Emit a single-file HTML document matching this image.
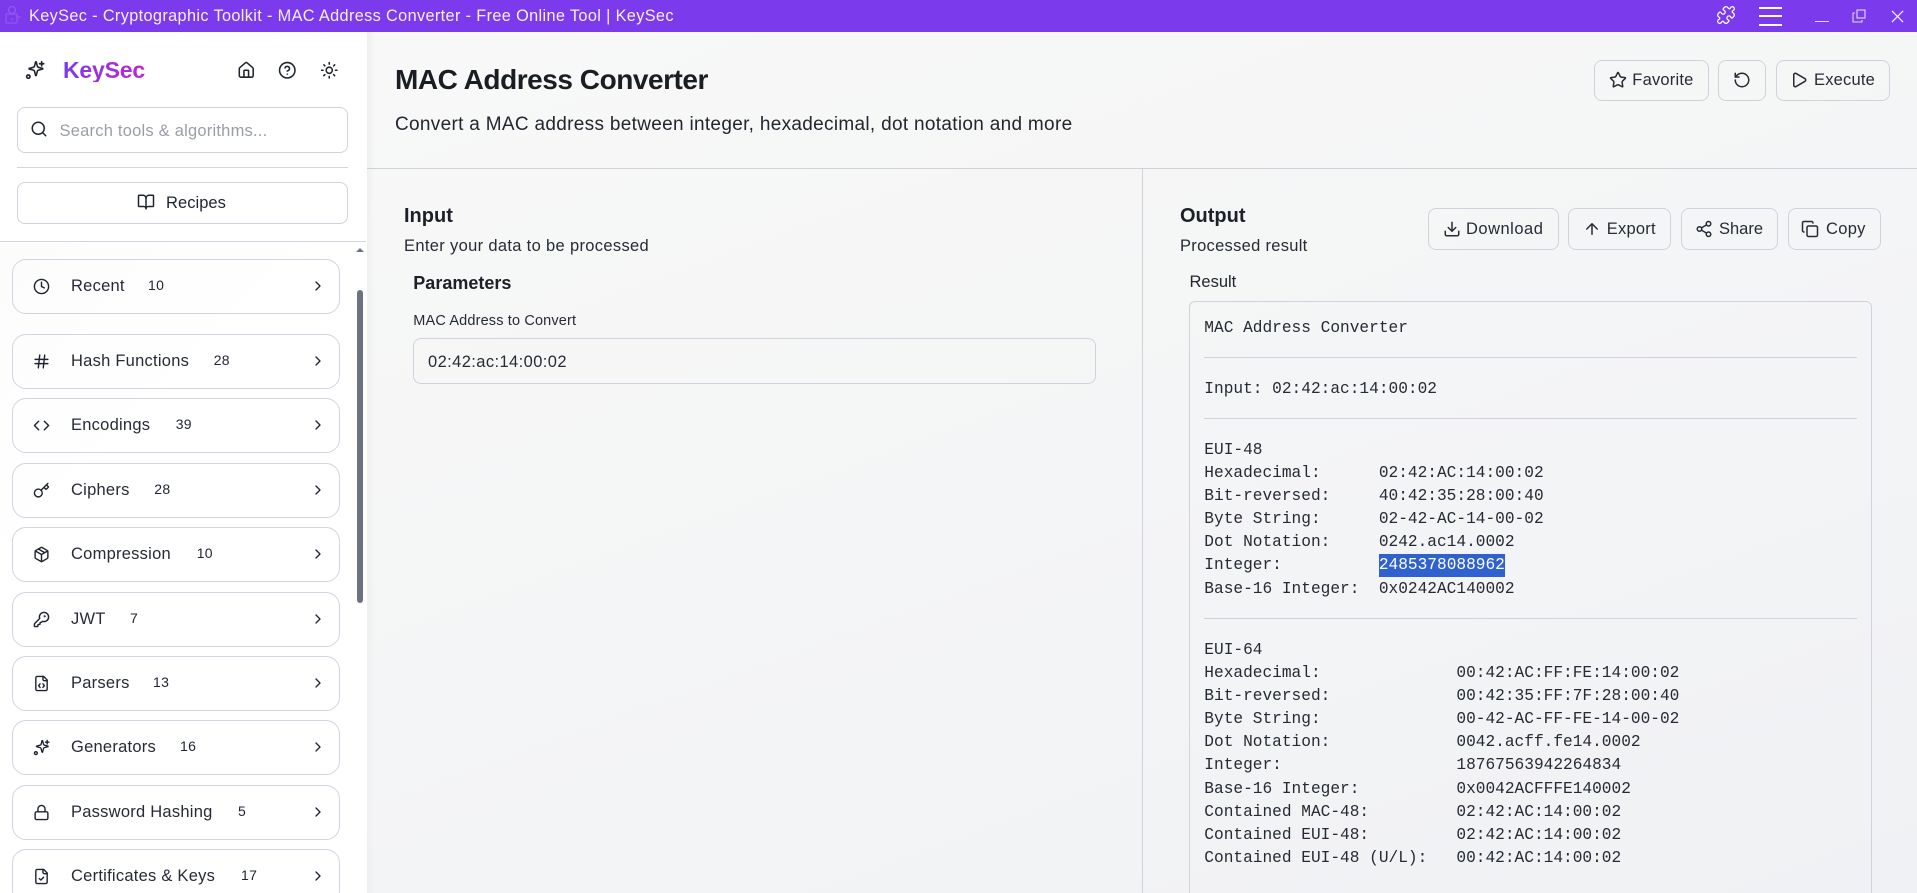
<!DOCTYPE html>
<html lang="en"><head><meta charset="utf-8"><title>KeySec - MAC Address Converter</title>
<style>
*{box-sizing:border-box;margin:0;padding:0}
html,body{width:1917px;height:893px;overflow:hidden;background:#f4f5f6}
body{position:relative;font-family:"Liberation Sans",sans-serif;color:#1f2430}
svg.i{position:absolute;fill:none;stroke:currentColor;stroke-width:2;stroke-linecap:round;stroke-linejoin:round}
.t{position:absolute;white-space:pre;line-height:24px}
#bar{position:absolute;left:0;top:0;width:1917px;height:32px;background:#7c3aed;color:#fff}
#side{position:absolute;left:0;top:32px;width:367px;height:861px;background:linear-gradient(135deg,#fafafb 0%,#fff 45%,#fff 100%);overflow:hidden}
#sidetop{position:absolute;left:0;top:0;width:366px;height:210px;background:#fff;border-bottom:1px solid #d3d6e0}
#main{position:absolute;left:367px;top:32px;width:1550px;height:861px;background:linear-gradient(160deg,#f8f8f8 0%,#f4f5f6 50%,#f0f1f4 100%)}
#shade{position:absolute;left:0;top:0;width:8px;height:861px;background:linear-gradient(90deg,#efefef,rgba(240,240,240,0))}
.abs{position:absolute}
.box{position:absolute;border:1px solid #cfd3de;border-radius:8px}
.item{position:absolute;left:12.3px;width:327.4px;height:54.5px;border:1px solid #d2d5e0;border-radius:14px}
.item .n{position:absolute;left:57.7px;top:0;line-height:53.5px;font-size:16.5px;letter-spacing:.25px;white-space:pre;color:#272b36}
.item .c{position:absolute;top:-1px;line-height:52.5px;font-size:14px;letter-spacing:.3px;color:#1f2430}
.item svg.ic{left:20.2px;top:17.75px;width:17px;height:17px;stroke-width:2}
.item svg.ch{left:296.7px;top:17.75px;width:16px;height:16px;stroke-width:2}
.btn{position:absolute;border:1px solid #cfd3de;border-radius:8px}
.btn .x{position:absolute;white-space:pre;font-size:16.5px;top:0;line-height:38.7px;color:#272b36}
.btn svg{width:18px;height:18px;top:10.35px;color:#272b36}
.o svg{top:10.85px}
.o .x{top:1px;line-height:39.7px}
pre{position:absolute;left:1204.3px;font-family:"Liberation Mono",monospace;font-size:16.17px;line-height:23.19px;color:#262a34}
.hr{position:absolute;left:1204px;width:653px;height:1px;background:#d0d3de}
</style></head><body>
<svg width="0" height="0" style="position:absolute"><defs>
<symbol id="spark" viewBox="0 0 24 24"><path d="M10.4 15.8A2 2 0 0 0 9 14.4l-5-1.3a.5.5 0 0 1 0-1l5-1.3a2 2 0 0 0 1.4-1.4l1.3-5a.5.5 0 0 1 1 0l1.3 5a2 2 0 0 0 1.4 1.4l5 1.3a.5.5 0 0 1 0 1l-5 1.3a2 2 0 0 0-1.4 1.4l-1.3 5a.5.5 0 0 1-1 0z" transform="translate(1.5 -1.5) scale(.95)"/><path d="M20 2v5M22.5 4.5h-5"/><circle cx="4" cy="20" r="2"/></symbol>
<symbol id="chev" viewBox="0 0 24 24"><path d="m9 18 6-6-6-6"/></symbol>
<symbol id="clock" viewBox="0 0 24 24"><circle cx="12" cy="12" r="10"/><path d="M12 6v6l4 2"/></symbol>
<symbol id="hash" viewBox="0 0 24 24"><path d="M3 9h18M3 15h18M9.5 3 7.5 21M16.5 3l-2 18"/></symbol>
<symbol id="code" viewBox="0 0 24 24"><path d="m16 18 6-6-6-6M8 6l-6 6 6 6"/></symbol>
<symbol id="key" viewBox="0 0 24 24"><path d="m15.5 7.5 2.3 2.3a1 1 0 0 0 1.4 0l2.1-2.1a1 1 0 0 0 0-1.4L19 4M21 2l-9.6 9.6"/><circle cx="7.5" cy="15.5" r="5.5"/></symbol>
<symbol id="pkg" viewBox="0 0 24 24"><path d="M11 21.73a2 2 0 0 0 2 0l7-4A2 2 0 0 0 21 16V8a2 2 0 0 0-1-1.73l-7-4a2 2 0 0 0-2 0l-7 4A2 2 0 0 0 3 8v8a2 2 0 0 0 1 1.73z"/><path d="M12 22V12M3.29 7 12 12l8.71-5M7.5 4.27l9 5.15"/></symbol>
<symbol id="keyr" viewBox="0 0 24 24"><path d="M2.586 17.414A2 2 0 0 0 2 18.828V21a1 1 0 0 0 1 1h3a1 1 0 0 0 1-1v-1a1 1 0 0 1 1-1h1a1 1 0 0 0 1-1v-1a1 1 0 0 1 1-1h.172a2 2 0 0 0 1.414-.586l.814-.814a6.5 6.5 0 1 0-4-4z"/><circle cx="16.5" cy="7.5" r=".5" fill="currentColor"/></symbol>
<symbol id="fcode" viewBox="0 0 24 24"><path d="M15 2H6a2 2 0 0 0-2 2v16a2 2 0 0 0 2 2h12a2 2 0 0 0 2-2V7Z"/><path d="M14 2v4a2 2 0 0 0 2 2h4M10 12.5 8 15l2 2.5M14 12.5l2 2.5-2 2.5"/></symbol>
<symbol id="lock" viewBox="0 0 24 24"><rect x="3" y="11" width="18" height="11" rx="2"/><path d="M7 11V7a5 5 0 0 1 10 0v4"/></symbol>
<symbol id="fcheck" viewBox="0 0 24 24"><path d="M15 2H6a2 2 0 0 0-2 2v16a2 2 0 0 0 2 2h12a2 2 0 0 0 2-2V7Z"/><path d="M14 2v4a2 2 0 0 0 2 2h4M9 15l2 2 4-4"/></symbol>
</defs></svg>

<div id="bar">
  <svg class="abs" style="left:3px;top:4px" width="18" height="22" viewBox="0 0 18 22" fill="none" stroke="#9157f0" stroke-width="1.3"><circle cx="9" cy="6" r="3.5"/><rect x="3" y="10" width="11" height="9" rx="1"/><path d="M14 13h4M9 14v2"/></svg>
  <div class="t" style="left:29px;top:4px;font-size:16.3px;letter-spacing:.36px;color:#f5efff">KeySec - Cryptographic Toolkit - MAC Address Converter - Free Online Tool | KeySec</div>
  <svg class="i" style="left:1716px;top:5px;stroke-width:1.5;color:#fff" width="20" height="20" viewBox="0 0 24 24"><path d="M19.439 7.85c-.049.322.059.648.289.878l1.568 1.568c.47.47.706 1.087.706 1.704s-.235 1.233-.706 1.704l-1.611 1.611a.98.98 0 0 1-.837.276c-.47-.07-.802-.48-.968-.925a2.501 2.501 0 1 0-3.214 3.214c.446.166.855.497.925.968a.979.979 0 0 1-.276.837l-1.61 1.61a2.404 2.404 0 0 1-1.705.707 2.402 2.402 0 0 1-1.704-.706l-1.568-1.568a1.026 1.026 0 0 0-.877-.29c-.493.074-.84.504-1.02.968a2.5 2.5 0 1 1-3.237-3.237c.464-.18.894-.527.967-1.02a1.026 1.026 0 0 0-.289-.877l-1.568-1.568A2.402 2.402 0 0 1 1.998 12c0-.617.236-1.234.706-1.704L4.23 8.77c.24-.24.581-.353.917-.303.515.077.877.528 1.073 1.01a2.5 2.5 0 1 0 3.259-3.259c-.482-.196-.933-.558-1.01-1.073-.05-.336.062-.676.303-.917l1.525-1.525A2.402 2.402 0 0 1 12 1.998c.617 0 1.234.236 1.704.706l1.568 1.568c.23.23.556.338.877.29.493-.074.84-.504 1.02-.968a2.5 2.5 0 1 1 3.237 3.237c-.464.18-.894.527-.967 1.02Z"/></svg>
  <div class="abs" style="left:1759px;top:7px;width:23px;height:2px;background:#fff"></div>
  <div class="abs" style="left:1759px;top:15px;width:23px;height:2px;background:#fff"></div>
  <div class="abs" style="left:1759px;top:24px;width:23px;height:2px;background:#fff"></div>
  <div class="abs" style="left:1815px;top:21px;width:14px;height:1px;background:#e6d9ff"></div>
  <svg class="abs" style="left:1852px;top:9px" width="14" height="14" viewBox="0 0 14 14" fill="none" stroke="#e6d9ff" stroke-width="1.1"><rect x="5" y="1" width="8" height="8"/><path d="M3 4H1v9h9v-2"/></svg>
  <svg class="abs" style="left:1891px;top:10px" width="13" height="13" viewBox="0 0 14 14" fill="none" stroke="#f5efff" stroke-width="1.4"><path d="M1 1l12 12M13 1 1 13"/></svg>
</div>

<div id="side">
  <div id="sidetop"></div>
  <svg class="i" style="left:25px;top:28px;color:#1f2430;stroke-width:2" width="20" height="20"><use href="#spark"/></svg>
  <div class="t" style="left:63px;top:26px;font-size:23px;font-weight:bold;letter-spacing:-.2px;background:linear-gradient(90deg,#7c3aed,#c026d3);-webkit-background-clip:text;background-clip:text;color:transparent;padding-right:2px">KeySec</div>
  <svg class="i" style="left:237px;top:29px" width="18.5" height="18.5" viewBox="0 0 24 24"><path d="M15 21v-8a1 1 0 0 0-1-1h-4a1 1 0 0 0-1 1v8"/><path d="M3 10a2 2 0 0 1 .709-1.528l7-5.999a2 2 0 0 1 2.582 0l7 5.999A2 2 0 0 1 21 10v9a2 2 0 0 1-2 2H5a2 2 0 0 1-2-2z"/></svg>
  <svg class="i" style="left:278px;top:29px" width="18.5" height="18.5" viewBox="0 0 24 24"><circle cx="12" cy="12" r="10"/><path d="M9.09 9a3 3 0 0 1 5.83 1c0 2-3 3-3 3M12 17h.01"/></svg>
  <svg class="i" style="left:320px;top:29px" width="18.5" height="18.5" viewBox="0 0 24 24"><circle cx="12" cy="12" r="4"/><path d="M12 2v2M12 20v2M4.93 4.93l1.41 1.41M17.66 17.66l1.41 1.41M2 12h2M20 12h2M6.34 17.66l-1.41 1.41M19.07 4.93l-1.41 1.41"/></svg>

  <div class="box" style="left:17px;top:75px;width:331px;height:46px"></div>
  <svg class="i" style="left:30px;top:88px" width="18" height="18" viewBox="0 0 24 24"><path d="m21 21-4.3-4.3"/><circle cx="11" cy="11" r="8"/></svg>
  <div class="t" style="left:59.5px;top:87px;font-size:16.5px;letter-spacing:.22px;color:#9a9ea8">Search tools &amp; algorithms...</div>
  <div class="abs" style="left:17px;top:135px;width:331px;height:1px;background:#d3d6e0"></div>
  <div class="box" style="left:17px;top:150px;width:331px;height:41.5px"></div>
  <svg class="i" style="left:137px;top:161px" width="18" height="18" viewBox="0 0 24 24"><path d="M12 7v14"/><path d="M3 18a1 1 0 0 1-1-1V4a1 1 0 0 1 1-1h5a4 4 0 0 1 4 4 4 4 0 0 1 4-4h5a1 1 0 0 1 1 1v13a1 1 0 0 1-1 1h-6a3 3 0 0 0-3 3 3 3 0 0 0-3-3z"/></svg>
  <div class="t" style="left:166px;top:159px;font-size:16.5px;letter-spacing:.05px">Recipes</div>

  <div class="abs" style="left:356px;top:216px;width:0;height:0;border-left:4px solid transparent;border-right:4px solid transparent;border-bottom:4px solid #6b7280"></div>
  <div class="abs" style="left:357px;top:258px;width:6px;height:313px;background:#6b7280;border-radius:3px"></div>

  <div class="item" style="top:227.3px"><svg class="i ic"><use href="#clock"/></svg><span class="n">Recent</span><span class="c" style="left:134.7px">10</span><svg class="i ch"><use href="#chev"/></svg></div>
  <div class="item" style="top:302px"><svg class="i ic"><use href="#hash"/></svg><span class="n">Hash Functions</span><span class="c" style="left:200.4px">28</span><svg class="i ch"><use href="#chev"/></svg></div>
  <div class="item" style="top:366.3px"><svg class="i ic"><use href="#code"/></svg><span class="n">Encodings</span><span class="c" style="left:162.4px">39</span><svg class="i ch"><use href="#chev"/></svg></div>
  <div class="item" style="top:431.3px"><svg class="i ic"><use href="#key"/></svg><span class="n">Ciphers</span><span class="c" style="left:141px">28</span><svg class="i ch"><use href="#chev"/></svg></div>
  <div class="item" style="top:495.3px"><svg class="i ic"><use href="#pkg"/></svg><span class="n">Compression</span><span class="c" style="left:183.4px">10</span><svg class="i ch"><use href="#chev"/></svg></div>
  <div class="item" style="top:560px"><svg class="i ic"><use href="#keyr"/></svg><span class="n">JWT</span><span class="c" style="left:116.7px">7</span><svg class="i ch"><use href="#chev"/></svg></div>
  <div class="item" style="top:624px"><svg class="i ic"><use href="#fcode"/></svg><span class="n">Parsers</span><span class="c" style="left:139.7px">13</span><svg class="i ch"><use href="#chev"/></svg></div>
  <div class="item" style="top:688.3px;height:55px"><svg class="i ic"><use href="#spark"/></svg><span class="n">Generators</span><span class="c" style="left:166.7px">16</span><svg class="i ch"><use href="#chev"/></svg></div>
  <div class="item" style="top:753.3px"><svg class="i ic"><use href="#lock"/></svg><span class="n">Password Hashing</span><span class="c" style="left:224.7px">5</span><svg class="i ch"><use href="#chev"/></svg></div>
  <div class="item" style="top:817.3px"><svg class="i ic"><use href="#fcheck"/></svg><span class="n">Certificates &amp; Keys</span><span class="c" style="left:227.7px">17</span><svg class="i ch"><use href="#chev"/></svg></div>
</div>

<div id="main"><div id="shade"></div></div>

<div class="t" style="left:395px;top:68px;font-size:28px;font-weight:bold;letter-spacing:-.46px;color:#1a1d24">MAC Address Converter</div>
<div class="t" style="left:395px;top:113px;font-size:19px;letter-spacing:.31px;color:#22262f">Convert a MAC address between integer, hexadecimal, dot notation and more</div>
<div class="abs" style="left:367px;top:168px;width:1550px;height:1px;background:#cfd2dd"></div>
<div class="abs" style="left:1142px;top:168px;width:1px;height:725px;background:#cfd2dd"></div>

<div class="btn" style="left:1594px;top:60px;width:114.7px;height:40.7px"><svg class="i" style="left:14px" viewBox="0 0 24 24"><path d="M11.525 2.295a.53.53 0 0 1 .95 0l2.31 4.679a2.123 2.123 0 0 0 1.595 1.16l5.166.756a.53.53 0 0 1 .294.904l-3.736 3.638a2.123 2.123 0 0 0-.611 1.878l.882 5.14a.53.53 0 0 1-.771.56l-4.618-2.428a2.122 2.122 0 0 0-1.973 0L6.396 21.01a.53.53 0 0 1-.77-.56l.881-5.139a2.122 2.122 0 0 0-.611-1.879L2.16 9.795a.53.53 0 0 1 .294-.906l5.165-.755a2.122 2.122 0 0 0 1.597-1.16z"/></svg><span class="x" style="left:37.3px;letter-spacing:.2px">Favorite</span></div>
<div class="btn" style="left:1718.3px;top:60px;width:47.7px;height:40.7px"><svg class="i" style="left:13.7px" viewBox="0 0 24 24"><path d="M3 12a9 9 0 1 0 9-9 9.75 9.75 0 0 0-6.74 2.74L3 8"/><path d="M3 3v5h5"/></svg></div>
<div class="btn" style="left:1776px;top:60px;width:114px;height:40.7px"><svg class="i" style="left:13px" viewBox="0 0 24 24"><path d="M5 5a2 2 0 0 1 3.008-1.728l11.997 6.998a2 2 0 0 1 .003 3.458l-12 7A2 2 0 0 1 5 19z"/></svg><span class="x" style="left:37px;letter-spacing:.2px">Execute</span></div>

<div class="t" style="left:404px;top:204px;font-size:20px;font-weight:bold;color:#1d2028">Input</div>
<div class="t" style="left:404px;top:233.5px;font-size:16.5px;letter-spacing:.33px;color:#272b36">Enter your data to be processed</div>
<div class="t" style="left:413.3px;top:271px;font-size:18px;font-weight:bold;color:#1d2028">Parameters</div>
<div class="t" style="left:413.3px;top:309px;font-size:14.5px;letter-spacing:.15px;color:#272b36">MAC Address to Convert</div>
<div class="box" style="left:413px;top:338px;width:682.6px;height:45.5px"></div>
<div class="t" style="left:428px;top:350px;font-size:16.5px;letter-spacing:.4px;color:#272b36">02:42:ac:14:00:02</div>

<div class="t" style="left:1180px;top:204px;font-size:20px;font-weight:bold;color:#1d2028">Output</div>
<div class="t" style="left:1180px;top:233.5px;font-size:16.5px;letter-spacing:.29px;color:#272b36">Processed result</div>

<div class="btn o" style="left:1428px;top:208px;width:130.7px;height:41.7px"><svg class="i" style="left:14px" viewBox="0 0 24 24"><path d="M12 15V3M21 15v4a2 2 0 0 1-2 2H5a2 2 0 0 1-2-2v-4M7 10l5 5 5-5"/></svg><span class="x" style="left:37px;letter-spacing:.5px">Download</span></div>
<div class="btn o" style="left:1568.3px;top:208px;width:102.4px;height:41.7px"><svg class="i" style="left:13.7px" viewBox="0 0 24 24"><path d="m5 12 7-7 7 7M12 19V5"/></svg><span class="x" style="left:37.4px;letter-spacing:.25px">Export</span></div>
<div class="btn o" style="left:1681px;top:208px;width:96.5px;height:41.7px"><svg class="i" style="left:13px" viewBox="0 0 24 24"><circle cx="18" cy="5" r="3"/><circle cx="6" cy="12" r="3"/><circle cx="18" cy="19" r="3"/><path d="m8.59 13.51 6.83 3.98M15.41 6.51l-6.82 3.98"/></svg><span class="x" style="left:37px">Share</span></div>
<div class="btn o" style="left:1788px;top:208px;width:92.7px;height:41.7px"><svg class="i" style="left:12px" viewBox="0 0 24 24"><rect x="8" y="8" width="14" height="14" rx="2"/><path d="M4 16c-1.1 0-2-.9-2-2V4c0-1.1.9-2 2-2h10c1.1 0 2 .9 2 2"/></svg><span class="x" style="left:37px;letter-spacing:.3px">Copy</span></div>

<div class="t" style="left:1189.5px;top:270px;font-size:16.5px;color:#22262f">Result</div>
<div class="abs" style="left:1189px;top:301px;width:683px;height:620px;border:1px solid #cfd3de;border-radius:6px"></div>
<pre style="top:317.4px">MAC Address Converter</pre>
<div class="hr" style="top:357px"></div>
<pre style="top:378px">Input: 02:42:ac:14:00:02</pre>
<div class="hr" style="top:418px"></div>
<div class="abs" style="left:1379px;top:554px;width:126px;height:22.7px;background:#2f62cf"></div>
<pre style="top:438.55px">EUI-48
Hexadecimal:      02:42:AC:14:00:02
Bit-reversed:     40:42:35:28:00:40
Byte String:      02-42-AC-14-00-02
Dot Notation:     0242.ac14.0002
Integer:          <span style="color:#fff">2485378088962</span>
Base-16 Integer:  0x0242AC140002</pre>
<div class="hr" style="top:618px"></div>
<pre style="top:638.55px">EUI-64
Hexadecimal:              00:42:AC:FF:FE:14:00:02
Bit-reversed:             00:42:35:FF:7F:28:00:40
Byte String:              00-42-AC-FF-FE-14-00-02
Dot Notation:             0042.acff.fe14.0002
Integer:                  18767563942264834
Base-16 Integer:          0x0042ACFFFE140002
Contained MAC-48:         02:42:AC:14:00:02
Contained EUI-48:         02:42:AC:14:00:02
Contained EUI-48 (U/L):   00:42:AC:14:00:02</pre>
</body></html>
